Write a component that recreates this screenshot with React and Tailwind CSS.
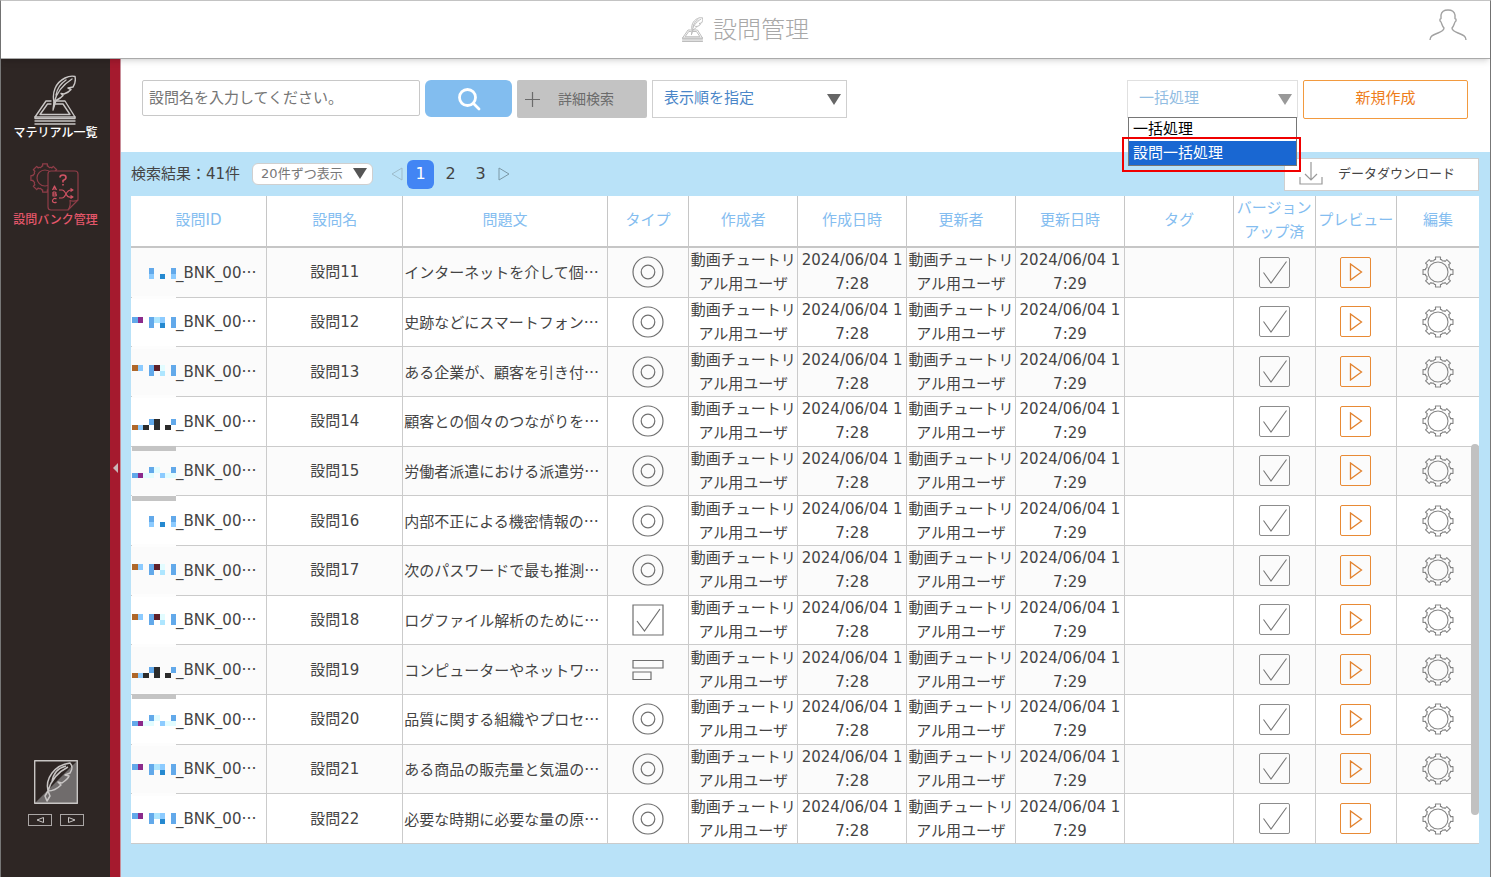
import { useState } from 'react'

const COLORS = {
  b: '#62a9ea',
  l: '#8ccbff',
  d: '#2589d0',
  p: '#8b2a8b',
  c: '#aee6ff',
  o: '#b0682a',
  m: '#5e1f28',
  w: '#e2fcff',
  k: '#2b2b2b',
}

// Masked account prefix of each question ID, 8x2 blocks.
const MASKS = {
  a: { y: 20, rows: ['...b...b', '...l.d.l'] },
  b: { y: 19, rows: ['bp.bcl.b', '...b.d.b'] },
  c: { y: 18, rows: ['ol.bmw.b', '...b.c.b'] },
  d: { y: 22, rows: ['...bk..b', 'olk.k.k.'] },
  e: { y: 20, rows: ['...bw..b', 'bpww.lww'] },
}

const ROWS = [
  { no: 11, text: 'インターネットを介して個…', type: 'radio', mask: 'a' },
  { no: 12, text: '史跡などにスマートフォン…', type: 'radio', mask: 'b' },
  { no: 13, text: 'ある企業が、顧客を引き付…', type: 'radio', mask: 'c' },
  { no: 14, text: '顧客との個々のつながりを…', type: 'radio', mask: 'd', bar: true },
  { no: 15, text: '労働者派遣における派遣労…', type: 'radio', mask: 'e', bar: true },
  { no: 16, text: '内部不正による機密情報の…', type: 'radio', mask: 'a' },
  { no: 17, text: '次のパスワードで最も推測…', type: 'radio', mask: 'c' },
  { no: 18, text: 'ログファイル解析のために…', type: 'check', mask: 'c' },
  { no: 19, text: 'コンピューターやネットワ…', type: 'sort', mask: 'd', bar: true },
  { no: 20, text: '品質に関する組織やプロセ…', type: 'radio', mask: 'e' },
  { no: 21, text: 'ある商品の販売量と気温の…', type: 'radio', mask: 'b' },
  { no: 22, text: '必要な時期に必要な量の原…', type: 'radio', mask: 'b' },
]

const COLUMNS = [
  { label: '設問ID', width: 'w-[10%]' },
  { label: '設問名', width: 'w-[10%]' },
  { label: '問題文', width: 'w-[15%]' },
  { label: 'タイプ', width: 'w-[6%]' },
  { label: '作成者', width: 'w-[8%]' },
  { label: '作成日時', width: 'w-[8%]' },
  { label: '更新者', width: 'w-[8%]' },
  { label: '更新日時', width: 'w-[8%]' },
  { label: 'タグ', width: 'w-[8%]' },
  { label: 'バージョンアップ済', width: 'w-[6%]' },
  { label: 'プレビュー', width: 'w-[6%]' },
  { label: '編集', width: 'w-[6%]' },
]

// Outline of a cog with eight blunt teeth.
function gearPath(cx, cy, outer, root) {
  const pts = []
  for (let i = 0; i < 8; i++) {
    const a = (i * Math.PI) / 4
    const steps = [
      [-0.36, root],
      [-0.28, root + 0.9],
      [-0.19, root + 0.7],
      [-0.17, outer],
      [0.17, outer],
      [0.19, root + 0.7],
      [0.28, root + 0.9],
      [0.36, root],
    ]
    for (const [da, r] of steps) {
      pts.push(`${(cx + r * Math.sin(a + da)).toFixed(2)} ${(cy - r * Math.cos(a + da)).toFixed(2)}`)
    }
  }
  return `M${pts.join('L')}Z`
}

const GEAR = gearPath(16, 16, 15.2, 12)
const BANK_GEAR = gearPath(15, 16, 14.3, 11.4)

function GearIcon() {
  return (
    <svg viewBox="0 0 32 32" className="size-8" fill="none" stroke="#858585" strokeWidth="1.1" strokeLinejoin="round" aria-hidden="true">
      <path d={GEAR} />
      <circle cx="16" cy="16" r="10" />
    </svg>
  )
}

function QuillIcon({ className, strokeWidth = 1.4 }) {
  return (
    <svg viewBox="0 0 42 50" className={className} fill="none" stroke="currentColor" strokeWidth={strokeWidth} strokeLinejoin="round" strokeLinecap="round" aria-hidden="true">
      <path d="M17 26H12L1 42H41L31 26H22" />
      <path d="M17 29H13.5L6 39.5H36L29 29H21.5" />
      <path d="M1 42V43.5H41V42M1 46H41M1 49H41" />
      <path d="M19 35L20 27C18 18 21 8 31 3C35 1 39 1 41 1.5C42 6 41 9 39 12L34 13L37 14.5C35 17 33 18 30 19L27 18.5L29 20.5C27 23 25 24 22 25.5L19 35Z" />
      <path d="M20 28C22 19 27 11 38 4M22 20C23 14 26 9 32 5" />
    </svg>
  )
}

function BankIcon() {
  return (
    <svg viewBox="0 0 50 50" className="h-[50px] w-[50px]" fill="none" stroke="currentColor" strokeWidth="1.2" strokeLinejoin="round" aria-hidden="true">
      <path d={BANK_GEAR} />
      <circle cx="15" cy="16" r="8" />
      <path d="M21 9H45Q48 9 48 12V38L38 48H21Q18 48 18 45V12Q18 9 21 9Z" fill="#2e2624" />
      <path d="M48 38Q44 40 40 38.5Q41 44 38 48" />
      <g stroke="#cf5263">
        <path d="M30 15.5Q30 13 33 13T36 15.5Q36 17.5 33 18.5V20.5M33 22V23.5" strokeWidth="1.6" />
        <path d="M22.5 28L24.5 24L26.5 28M23 27H26M23 30V34H25Q26.5 34 26.5 33T25 32H23M25 32Q26 32 26 31T25 30H23M26.5 37Q24.5 35.5 23 37.5T24 40.5Q25.5 41 26.5 40" />
        <path d="M29 28H32Q34 28 36 32T41 35H43M29 36H32Q34 36 36 32T41 28H43M40.5 26.5L43 28L40.5 29.5M40.5 33.5L43 35L40.5 36.5" />
      </g>
    </svg>
  )
}

function TypeIcon({ type }) {
  return (
    <svg viewBox="0 0 32 32" className="mx-auto size-8" fill="none" stroke="#6f6f6f" strokeWidth="1.2" role="img" aria-label={type}>
      {type === 'radio' && (
        <>
          <circle cx="16" cy="16" r="15" />
          <circle cx="16" cy="16" r="6.8" />
        </>
      )}
      {type === 'check' && (
        <>
          <path d="M1 1H31V31H1Z" />
          <path d="M5 17L12.5 27L28 5" />
        </>
      )}
      {type === 'sort' && (
        <>
          <path d="M1 6.5H31V14H1Z" />
          <path d="M1 18H19V25.5H1Z" />
        </>
      )}
    </svg>
  )
}

function Mask({ id, bar, last }) {
  const { y, rows } = MASKS[id]
  return (
    <svg viewBox="0 0 44 55" className="absolute top-0 left-px z-10 h-[55px] w-[44px]" shapeRendering="crispEdges" aria-hidden="true">
      {!last && <rect x="0" y="48" width="44" height="3" fill="#fdfdfd" />}
      {rows.map((row, r) =>
        [...row].map((ch, c) =>
          ch === '.' ? null : (
            <rect key={`${r}-${c}`} x={c * 5.5} y={y + r * 5.5} width="5.5" height="5.5" fill={COLORS[ch]} />
          )
        )
      )}
      {bar && <rect x="0" y="49" width="44" height="5" fill="#c4c4c4" />}
    </svg>
  )
}

function Caret({ className }) {
  return (
    <svg viewBox="0 0 14 11" className={`pointer-events-none absolute h-[11px] w-3.5 ${className}`} fill="currentColor" aria-hidden="true">
      <path d="M0 0H14L7 11Z" />
    </svg>
  )
}

function Sidebar() {
  return (
    <aside className="flex shrink-0">
      <nav className="flex w-[109px] flex-col items-center bg-[#2e2624] pt-4 text-[12px]">
        <a href="#materials" className="flex flex-col items-center text-white">
          <QuillIcon className="h-[50px] w-[42px] text-[#c9c6c5]" />
          <span className="leading-4 font-medium">マテリアル一覧</span>
        </a>
        <a href="#bank" className="mt-[21px] flex flex-col items-center text-[#e4566a]">
          <span className="text-[#8f3d48]"><BankIcon /></span>
          <span className="leading-4 font-medium">設問バンク管理</span>
        </a>
        <svg viewBox="0 0 44 44" className="mt-auto size-11" fill="none" stroke="#c8c5c4" strokeLinejoin="round" aria-hidden="true">
          <path d="M44 0V44H0Z" fill="#706c6c" stroke="none" />
          <path d="M.7 .7H43.3V43.3H.7Z" strokeWidth="1.4" />
          <path d="M14 31C11 19 20 5 36 3C39 6 38 10 36 13L31 15L35 16C34 19 31 21 28 23L24 22L27 25C24 28 20 31 14 31ZM14 31L11 36L13 41L16 36L14 31C17 20 24 12 34 7M18 22C19 14 24 8 32 6" strokeWidth="1.5" />
        </svg>
        <div className="mt-2.5 mb-[51px] flex gap-2">
          <button type="button" aria-label="前へ" className="grid h-3 w-6 place-items-center border border-[#aaa6a5]">
            <svg viewBox="0 0 8 6" className="h-1.5 w-2" fill="none" stroke="#c8c5c4"><path d="M7.5 .5V5.5L1 3Z" /></svg>
          </button>
          <button type="button" aria-label="次へ" className="grid h-3 w-6 place-items-center border border-[#aaa6a5]">
            <svg viewBox="0 0 8 6" className="h-1.5 w-2" fill="none" stroke="#c8c5c4"><path d="M.5 .5V5.5L7 3Z" /></svg>
          </button>
        </div>
      </nav>
      <button type="button" aria-label="メニューを閉じる" className="flex w-[11px] items-center justify-center border-r border-[#c98f9a] bg-[#a51a2e]">
        <svg viewBox="0 0 5 10" className="h-2.5 w-[5px]" fill="#c9b6b8"><path d="M5 0V10L0 5Z" /></svg>
      </button>
    </aside>
  )
}

function Toolbar() {
  return (
    <div className="flex h-[93px] items-start gap-[5px] pt-[21px] pr-[22px] pl-[21px] text-[15px]">
      <input
        type="text"
        aria-label="設問名"
        placeholder="設問名を入力してください。"
        className="h-9 w-[278px] rounded-xs border border-[#c8c8c8] px-1.5 placeholder:text-[#757575]"
      />
      <button type="button" aria-label="検索" className="grid h-[37px] w-[87px] place-items-center rounded-md bg-[#82bdef]">
        <svg viewBox="0 0 24 24" className="size-6" fill="none" stroke="#fff" strokeWidth="2.8" strokeLinecap="round">
          <circle cx="10.5" cy="10.5" r="8" />
          <path d="M16.5 16.5L22 22" />
        </svg>
      </button>
      <button type="button" className="flex h-[38px] w-[130px] items-center rounded-xs bg-[#c3c3c3] pl-2 text-[14px] text-[#6b6b6b]">
        <svg viewBox="0 0 15 15" className="mr-[18px] size-[15px]" stroke="#6b6b6b" strokeWidth="1.2"><path d="M7.5 0V15M0 7.5H15" /></svg>
        詳細検索
      </button>
      <div className="relative text-[#4a86c8]">
        <select aria-label="表示順" className="h-[38px] w-[195px] appearance-none border border-[#cfcfcf] bg-white pb-0.5 pl-[11px]">
          <option>表示順を指定</option>
        </select>
        <Caret className="top-3.5 right-1.5 text-[#666]" />
      </div>

      <div className="relative ml-auto text-[#92bde2]">
        <select aria-label="一括処理" className="h-[38px] w-[171px] appearance-none border border-[#e0e0e0] bg-white pb-0.5 pl-[11px]">
          <option>一括処理</option>
          <option>設問一括処理</option>
        </select>
        <Caret className="top-3.5 right-1.5 text-[#999]" />
        <ul role="listbox" aria-label="一括処理の種類" className="absolute inset-x-px top-[37px] z-20 border border-[#767676] bg-white leading-6">
          <li role="option" aria-selected="false" className="pl-1 leading-[23px] text-black">一括処理</li>
          <li role="option" aria-selected="true" className="bg-[#1967d2] pl-1 text-white">設問一括処理</li>
        </ul>
        <div className="absolute top-[57px] -right-[3px] -left-[5px] z-30 h-[35px] border-2 border-[#f00000]" />
      </div>
      <button type="button" className="h-[39px] w-[165px] rounded-xs border border-[#f29a3f] pb-0.5 text-[#ee7d1b]">新規作成</button>
    </div>
  )
}

function ResultBar() {
  const [page, setPage] = useState(1)

  return (
    <div className="flex h-11 items-center text-[#444]">
      <span className="text-[15px]">検索結果：41件</span>
      <div className="relative ml-3 text-[#777]">
        <select aria-label="表示件数" className="block h-[22px] w-[121px] appearance-none rounded-md border border-[#cfcfcf] bg-white pl-2 text-[13px]">
          <option>20件ずつ表示</option>
        </select>
        <Caret className="top-[5px] right-1.5 text-[#555]" />
      </div>
      <button type="button" aria-label="前のページ" className="ml-[18px]">
        <svg viewBox="0 0 12 14" className="h-3.5 w-3" fill="none" stroke="#9dbccb"><path d="M11 1V13L1 7Z" /></svg>
      </button>
      <div className="ml-1 flex gap-[3px] text-[16px]">
        {[1, 2, 3].map((n) => (
          <button
            key={n}
            type="button"
            onClick={() => setPage(n)}
            className={`h-[29px] w-[27px] rounded-md ${n === page ? 'bg-[#4285f4] text-white' : ''}`}
          >
            {n}
          </button>
        ))}
      </div>
      <button type="button" aria-label="次のページ" className="ml-1">
        <svg viewBox="0 0 12 14" className="h-3.5 w-3" fill="none" stroke="#7b98a6"><path d="M1 1V13L11 7Z" /></svg>
      </button>
      <button type="button" className="ml-auto flex h-[33px] w-[195px] items-center border border-[#cfcfcf] bg-white pl-3.5 text-[13px] text-[#444]">
        <svg viewBox="0 0 24 24" className="mr-[15px] size-6" fill="none" stroke="#999" strokeWidth="1.2">
          <path d="M12 0V18M6 12L12 18L18 12M1 15V22H23V15" />
        </svg>
        データダウンロード
      </button>
    </div>
  )
}

function QuestionTable() {
  const cell = 'border-r border-b border-[#cbcbcb] px-px'

  return (
    <div className="relative">
      <table className="h-[648px] w-full table-fixed border-separate border-spacing-0 bg-white text-center text-[15px] leading-6 text-[#444]">
        <thead>
          <tr>
            {COLUMNS.map((col) => (
              <th key={col.label} className={`h-[51px] border-r border-b-2 border-[#c6c6c6] px-0 pt-0 pb-0.5 font-normal text-[#84bdf0] last:border-r-0 ${col.width}`}>
                {col.label}
              </th>
            ))}
          </tr>
        </thead>
        <tbody>
          {ROWS.map((row, i) => (
            <tr key={row.no} className="odd:bg-[#fbfbfb]">
              <td className={`relative ${cell} pl-[45px] text-left whitespace-nowrap`}>
                <Mask id={row.mask} bar={row.bar} last={i === ROWS.length - 1} />
                _BNK_00<span className="font-['Noto_Sans_CJK_JP',sans-serif]">…</span>
              </td>
              <td className={cell}>設問{row.no}</td>
              <td className={`${cell} overflow-hidden text-left font-['Noto_Sans_CJK_JP',sans-serif] whitespace-nowrap`}>{row.text}</td>
              <td className={cell}><TypeIcon type={row.type} /></td>
              <td className={`${cell} break-all`}>動画チュートリアル用ユーザ</td>
              <td className={`${cell} break-all`}>2024/06/04 17:28</td>
              <td className={`${cell} break-all`}>動画チュートリアル用ユーザ</td>
              <td className={`${cell} break-all`}>2024/06/04 17:29</td>
              <td className={cell} />
              <td className={cell}>
                <label className="mx-auto grid size-[31px] cursor-pointer">
                  <input type="checkbox" defaultChecked aria-label={`設問${row.no} バージョンアップ済`} className="peer col-start-1 row-start-1 appearance-none rounded-xs border border-[#8c8c8c]" />
                  <svg viewBox="0 0 31 31" className="invisible col-start-1 row-start-1 peer-checked:visible" fill="none" stroke="#777" strokeWidth="1.1">
                    <path d="M4.5 15.5L12 26L27.5 4.5" />
                  </svg>
                </label>
              </td>
              <td className={cell}>
                <button type="button" aria-label="プレビュー" className="mx-auto grid size-[31px] place-items-center rounded-xs border border-[#e88a35]">
                  <svg viewBox="0 0 14 18" className="h-[18px] w-3.5" fill="none" stroke="#e2822e" strokeWidth="1.3"><path d="M1.5 1V17L12.5 9Z" /></svg>
                </button>
              </td>
              <td className="border-b border-[#cbcbcb] p-0">
                <button type="button" aria-label="編集" className="mx-auto block"><GearIcon /></button>
              </td>
            </tr>
          ))}
        </tbody>
      </table>
      {/* scroll thumb */}
      <div className="absolute right-0 bottom-[29px] h-[371px] w-2 rounded-full bg-[#c1c1c1]" />
    </div>
  )
}

export default function App() {
  return (
    <div lang="ja" className="flex min-h-screen flex-col border-x border-t border-x-[#777] border-t-[#c4c4c4] bg-white font-['DejaVu_Sans','Noto_Sans_CJK_JP',sans-serif]">
      <header className="relative z-10 grid h-[58px] grid-cols-[1fr_auto_1fr] items-center border-b border-[#aaa] bg-white shadow-md">
        <h1 className="col-start-2 flex items-center gap-2.5 text-[24px] font-light text-[#a8a8a8]">
          <QuillIcon className="h-[25px] w-[21px] text-[#bdbdbd]" strokeWidth={2} />
          設問管理
        </h1>
        <button type="button" aria-label="ユーザー" className="mr-[23px] mb-2.5 justify-self-end">
          <svg viewBox="0 0 38 32" className="h-8 w-[38px]" fill="none" stroke="#a2a2a2" strokeWidth="1.4" strokeLinejoin="round">
            <path d="M1 31C1 27 4 26 9 24C14 22 15 21 15 19C13 17 13 15 12 13C10.5 12 10.5 10 12 9.5V6C12.5 3 15 1 19 1S25.5 3 26 6V9.5C27.5 10 27.5 12 26 13C25 15 25 17 23 19C23 21 24 22 29 24C34 26 37 27 37 31" />
          </svg>
        </button>
      </header>
      <div className="flex flex-1">
        <Sidebar />
        <main className="flex min-w-0 flex-1 flex-col">
          <Toolbar />
          <section className="flex-1 bg-[#b9e2f8] pr-[11px] pl-2.5">
            <ResultBar />
            <QuestionTable />
          </section>
        </main>
      </div>
    </div>
  )
}
